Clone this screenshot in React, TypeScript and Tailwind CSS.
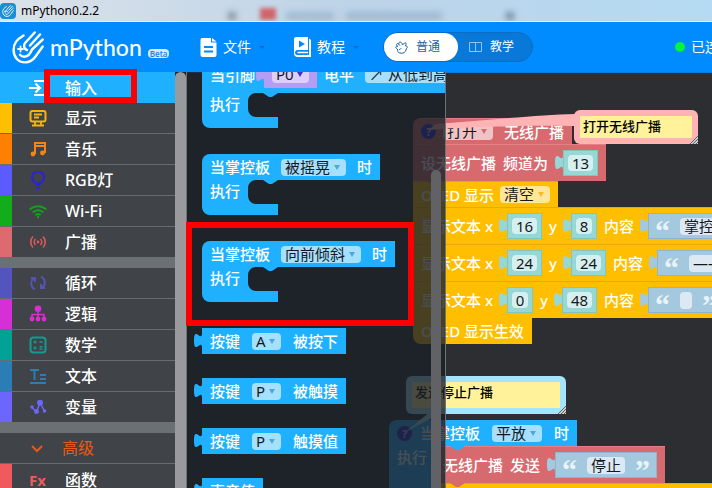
import React from 'react';
import clsx from 'clsx';

interface Category {
    name: string;
    strip: string;
    icon: React.ReactNode;
}

interface SelectFieldProps {
    label: string;
    value: string;
    arrow?: string;
    bg?: string;
}

const Icon: React.FC<{ className: string; children: React.ReactNode }> = ({ className, children }) => (
    <svg viewBox="0 0 18 18" className={clsx('size-[18px] shrink-0', className)} fill="none" stroke="currentColor" strokeWidth="2" aria-hidden="true">
        {children}
    </svg>
);

const HandLogo: React.FC<{ className: string }> = ({ className }) => (
    <svg viewBox="0 0 32 33" className={className} fill="none" stroke="currentColor" strokeWidth="2.4" strokeLinecap="round" strokeLinejoin="round" aria-hidden="true">
        <path d="M11.500 4.500C5 8.500 1.600 12 1.600 19c0 7 4.400 12.400 11.400 12.400 5 0 8-2.400 10.500-5.900L30.700 15.500" />
        <path d="M22.700 1.500 13.500 11.500c-2.500 3-1.500 6.500 1.500 7.500M28 3.500 18 14.500M30.700 8.500 20 18.500c-1.500 4-4 7-7.500 7.200-2 0-3.500-.7-4.500-2" />
        <path d="M8.500 15.500v5M6 18h5" strokeWidth="1.800" />
    </svg>
);

const mainCategories: Category[] = [
    {
        name: '显示',
        strip: 'bg-[#ffbf00]',
        icon: (
            <Icon className="text-[#f5b50a]">
                <rect x="1.500" y="2" width="15" height="10.500" rx="2" />
                <path d="M5 5.500h8M5 8.500h5M6 12v4M12 12v4M3 16.500h12" strokeWidth="1.800" />
            </Icon>
        ),
    },
    {
        name: '音乐',
        strip: 'bg-[#ff8000]',
        icon: (
            <Icon className="text-[#f58410]">
                <path d="M6 14V3h10v10M6 6h10" />
                <circle cx="4" cy="14" r="2.400" fill="currentColor" stroke="none" />
                <circle cx="13.500" cy="13" r="2.400" fill="currentColor" stroke="none" />
            </Icon>
        ),
    },
    {
        name: 'RGB灯',
        strip: 'bg-[#5b5bff]',
        icon: (
            <Icon className="text-[#2c22dd]">
                <circle cx="9" cy="6.500" r="6" />
                <path d="M6.500 14h5M7.500 17h3" />
            </Icon>
        ),
    },
    {
        name: 'Wi-Fi',
        strip: 'bg-[#13ac1b]',
        icon: (
            <Icon className="text-[#13a01b]">
                <path d="M.8 7.500c4.600-4.500 11.800-4.500 16.400 0M3.600 10.500c3-3 7.800-3 10.800 0M6.500 13.200c1.500-1.400 3.500-1.400 5 0" />
                <circle cx="9" cy="15" r="1.200" fill="currentColor" stroke="none" />
            </Icon>
        ),
    },
    {
        name: '广播',
        strip: 'bg-[#dc6a6e]',
        icon: (
            <Icon className="text-[#d8585c]">
                <path d="M4 3.500c-3 3-3 8 0 11M14 3.500c3 3 3 8 0 11M6.500 6c-1.700 1.700-1.700 4.300 0 6M11.500 6c1.700 1.700 1.700 4.300 0 6" strokeWidth="1.700" />
                <circle cx="9" cy="9" r="1.400" fill="currentColor" stroke="none" />
            </Icon>
        ),
    },
];

const logicCategories: Category[] = [
    {
        name: '循环',
        strip: 'bg-[#5454bf]',
        icon: (
            <Icon className="text-[#5454b5]">
                <path d="M4.500 4.500C1 8 1.500 13 6 15.500M2 4h4v4M13.500 13.500C17 10 16.500 5 12 2.500M16 14h-4v-4" />
            </Icon>
        ),
    },
    {
        name: '逻辑',
        strip: 'bg-[#d72fd7]',
        icon: (
            <Icon className="text-[#d72fd7]">
                <path d="M9 5v8M3 13V9.500h12V13" strokeWidth="1.500" />
                <circle cx="9" cy="3.800" r="3.300" fill="currentColor" stroke="none" />
                <g fill="currentColor" stroke="none">
                    <circle cx="3" cy="14" r="2.400" />
                    <circle cx="9" cy="14" r="2.400" />
                    <circle cx="15" cy="14" r="2.400" />
                </g>
            </Icon>
        ),
    },
    {
        name: '数学',
        strip: 'bg-[#00a296]',
        icon: (
            <Icon className="text-[#109c90]">
                <rect x="1.500" y="1.500" width="15" height="15" rx="3" />
                <path d="M4.500 6h3M6 4.500v3M10.500 6h3M4.500 12h3M10.500 10.800h3M10.500 13h3M6 10.500v3" strokeWidth="1.400" />
            </Icon>
        ),
    },
    {
        name: '文本',
        strip: 'bg-[#2a7db5]',
        icon: (
            <Icon className="text-[#2a7db5]">
                <path d="M1 3h9M5.500 3v10M11 8h6M11 12h6M1 16h16" />
            </Icon>
        ),
    },
    {
        name: '变量',
        strip: 'bg-[#6c66ff]',
        icon: (
            <Icon className="text-[#6c66ff]">
                <path d="M3 9.500 7.500 14 11 5l4.500 8" strokeWidth="1.500" />
                <g fill="currentColor" stroke="none">
                    <circle cx="3" cy="9" r="1.700" />
                    <circle cx="7.500" cy="13.500" r="2.400" />
                    <circle cx="11" cy="4.800" r="3" />
                    <circle cx="15.500" cy="13" r="1.800" />
                </g>
            </Icon>
        ),
    },
];

const CategoryRow: React.FC<{ item: Category }> = ({ item }) => (
    <li className="flex h-[31px] border-b border-[#686c70] last:h-[30px] last:border-b-0">
        <span className={clsx('w-3 shrink-0', item.strip)} />
        <button className="flex flex-1 items-center gap-[18px] pl-[17px] text-left">
            {item.icon}
            <span>{item.name}</span>
        </button>
    </li>
);

const Sidebar: React.FC = () => (
    <nav aria-label="积木分类" className="flex shrink-0 bg-[#1e2329]">
        <div className="w-[175px] bg-[#6b7074] text-[16px] leading-5 font-medium text-white">
            <button className="flex h-[31px] w-full items-center gap-[18px] bg-[#1fb1ff] pl-[29px] text-left">
                <Icon className="text-white">
                    <path d="M0 9h10M6.500 4.500 11 9l-4.500 4.500M5 2h12v14H5" />
                </Icon>
                <span>输入</span>
            </button>
            <ul className="bg-[#404347]">
                {mainCategories.map((item) => (
                    <CategoryRow key={item.name} item={item} />
                ))}
            </ul>
            <ul className="mt-[11px] bg-[#404347]">
                {logicCategories.map((item) => (
                    <CategoryRow key={item.name} item={item} />
                ))}
            </ul>
            <div className="mt-[11px] bg-[#404347]">
                <button className="flex h-[31px] w-full items-center gap-4 border-b border-[#686c70] pl-7 text-left font-normal text-[#e85a17]">
                    <Icon className="">
                        <path d="m4 7 5 5 5-5" />
                    </Icon>
                    <span>高级</span>
                </button>
                <div className="flex h-[31px]">
                    <span className="w-3 shrink-0 bg-[#f05a5f]" />
                    <button className="flex flex-1 items-center gap-[18px] pl-[17px] text-left">
                        <span className="w-[18px] font-['Open_Sans',sans-serif] text-[15px] font-bold text-[#f05a5f]" aria-hidden="true">
                            Fx
                        </span>
                        <span>函数</span>
                    </button>
                </div>
            </div>
        </div>
        <div className="w-[11px] rounded-t-full bg-[#999a9b]" />
    </nav>
);

const SelectField: React.FC<SelectFieldProps> = ({ label, value, arrow = 'text-[#4da8dc]', bg = 'bg-[#a5e0ff]' }) => (
    <span className={clsx('flex h-[17px] shrink-0 items-center rounded-sm font-normal', bg)}>
        <select aria-label={label} className="h-[17px] appearance-none pr-[15px] pl-1 leading-[17px] text-[#16191c]">
            <option>{value}</option>
        </select>
        <svg viewBox="0 0 6 5" className={clsx('pointer-events-none -ml-3 mr-1.5 h-[5px] w-1.5', arrow)} aria-hidden="true">
            <path d="M0 0h6L3 5z" fill="currentColor" />
        </svg>
    </span>
);

// left connector of an output block
const Tab: React.FC<{ className: string }> = ({ className }) => (
    <svg viewBox="0 0 8 15" className={clsx('mt-[5px] h-[15px] w-2 shrink-0', className)} aria-hidden="true">
        <path d="M8 0c0 10-8-8-8 7.500S8 5 8 15z" fill="currentColor" />
    </svg>
);

// small bump that sits on top of the next block
const Bump: React.FC<{ className: string }> = ({ className }) => (
    <svg viewBox="0 0 15 4" className={clsx('absolute top-full left-[15px] z-10 h-1 w-[15px]', className)} aria-hidden="true">
        <path d="M0 0h15L9 4H6z" fill="currentColor" />
    </svg>
);

const HelpButton: React.FC = () => (
    <button aria-label="帮助" className="flex size-[15px] shrink-0 items-center justify-center rounded-full bg-[#2a2bd0] text-[11px] leading-none font-bold text-[#b9bdf5]">
        ?
    </button>
);

const EventBlock: React.FC<{ children: React.ReactNode; tall?: boolean }> = ({ children, tall }) => (
    <div className="flex flex-col items-start">
        <div className={clsx('flex items-center gap-[11px] rounded-tl-lg bg-[#1fb1ff] px-2', tall ? 'h-[37px]' : 'h-[26px]')}>{children}</div>
        <div className="relative">
            <svg viewBox="0 0 76 35" className="h-[35px] w-[76px] text-[#1fb1ff]" aria-hidden="true">
                <path d="M0 0H76L70 4H67L61 0H54a8 8 0 0 0-8 8v8a8 8 0 0 0 8 8H76V35H8a8 8 0 0 1-8-8z" fill="currentColor" />
            </svg>
            <span className="absolute top-px left-2">执行</span>
        </div>
    </div>
);

const OutputBlock: React.FC<{ children: React.ReactNode }> = ({ children }) => (
    <div className="-ml-2 flex items-start">
        <Tab className="text-[#1fb1ff]" />
        <div className="flex h-[26px] items-center gap-3 bg-[#1fb1ff] px-2">{children}</div>
    </div>
);

const NumberValue: React.FC<{ value: string; label: string }> = ({ value, label }) => (
    <span className="flex shrink-0 items-start">
        <Tab className="text-[#97d8d6]" />
        <span className="flex h-[26px] items-center border border-[#83c4bd] bg-[#97d8d6] px-1">
            <input
                aria-label={label}
                defaultValue={value}
                className={clsx('h-4 rounded-sm bg-[#d6f0ef] text-center leading-4 font-normal text-[#16191c]', value.length > 1 ? 'w-[25px]' : 'w-4')}
            />
        </span>
    </span>
);

const TextValue: React.FC<{ value: string; label: string; width: string }> = ({ value, label, width }) => (
    <span className="flex shrink-0 items-start">
        <Tab className="text-[#a4c9de]" />
        <span className="flex h-[26px] items-center gap-2.5 border border-[#8fb6c8] bg-[#a4c9de] px-1.5 font-bold text-[#e9f3fa]">
            <span className="h-[26px] font-['Liberation_Serif',serif] text-[30px] leading-9">“</span>
            <input
                aria-label={label}
                defaultValue={value}
                className={clsx('h-[17px] rounded-sm bg-[#dce9f4] px-1 leading-[17px] font-normal text-[#16191c]', width)}
            />
            <span className="h-[26px] font-['Liberation_Serif',serif] text-[30px] leading-9">”</span>
        </span>
    </span>
);

const Statement: React.FC<{ tone: 'red' | 'yellow'; tall?: boolean; className?: string; children: React.ReactNode }> = ({ tone, tall, className, children }) => (
    <div
        className={clsx(
            'relative flex w-max items-center border-t px-2',
            tone === 'red' ? 'gap-[7px] border-[#e58084] bg-[#d76a6e]' : 'gap-1.5 border-[#e3ab09] bg-[#ffbf00]',
            tall ? 'h-[37px]' : 'h-[26px]',
            className,
        )}
    >
        {children}
        <Bump className={tone === 'red' ? 'text-[#d76a6e]' : 'text-[#ffbf00]'} />
    </div>
);

const displayRows = [
    { x: '16', y: '8', text: '掌控板', width: 'w-[53px]' },
    { x: '24', y: '24', text: '————', width: 'w-[68px]' },
    { x: '0', y: '48', text: '', width: 'w-3' },
];

const Note: React.FC<{ text: string; tone: string; size: string }> = ({ text, tone, size }) => (
    <div className={clsx('relative flex rounded-md p-1.5', tone, size)}>
        <textarea
            aria-label="注释"
            defaultValue={text}
            className="w-full resize-none overflow-hidden bg-[#fff29a] pl-[3px] text-[13px] leading-5 text-black"
        />
        <svg viewBox="0 0 8 8" className="absolute right-0 bottom-0 size-2" aria-hidden="true">
            <path d="M8 0v8H0z" fill="#c9c9c9" />
            <path d="M0 8 8 0M3 8l5-5M6 8l2-2" stroke="#666" strokeWidth="1" />
        </svg>
    </div>
);

const Workspace: React.FC = () => (
    <section aria-label="工作区" className="text-[15px] leading-5 font-medium text-white">
        <div className="absolute top-[46px] left-[227px]">
            <Statement tone="red" className="rounded-tl-lg">
                <HelpButton />
                <SelectField label="无线广播开关" value="打开" bg="bg-[#f0c4c5]" arrow="text-[#d76a6e]" />
                <span className="pl-1">无线广播</span>
            </Statement>
            <Statement tone="red" tall>
                <span>设无线广播</span>
                <span>频道为</span>
                <NumberValue label="频道" value="13" />
            </Statement>
            <Statement tone="yellow">
                <span>OLED 显示</span>
                <SelectField label="OLED 显示" value="清空" bg="bg-[#ffe699]" arrow="text-[#f5bd1c]" />
            </Statement>
            {displayRows.map((row) => (
                <Statement key={row.x} tone="yellow" tall>
                    <span>显示文本 x</span>
                    <NumberValue label="x" value={row.x} />
                    <span className="pl-px">y</span>
                    <NumberValue label="y" value={row.y} />
                    <span className="pl-px">内容</span>
                    <TextValue label="内容" value={row.text} width={row.width} />
                </Statement>
            ))}
            <div className="flex h-[26px] w-max items-center rounded-bl-lg bg-[#ffbf00] px-2">OLED 显示生效</div>
        </div>

        <div className="absolute top-[348px] left-[203px] flex flex-col items-start">
            <div className="flex h-[26px] items-center gap-3 rounded-tl-lg bg-[#1fb1ff] px-2">
                <span className="flex items-center gap-2">
                    <HelpButton />
                    当掌控板
                </span>
                <SelectField label="姿态" value="平放" />
                <span>时</span>
            </div>
            <div className="flex">
                <div className="w-[46px] bg-[#1fb1ff] pt-px pl-2">执行</div>
                <div className="relative">
                    <svg viewBox="0 0 15 4" className="absolute top-0 left-[15px] z-10 h-1 w-[15px] text-[#1fb1ff]" aria-hidden="true">
                        <path d="M0 0h15L9 4H6z" fill="currentColor" />
                    </svg>
                    <Statement tone="red" tall>
                        <span>无线广播</span>
                        <span>发送</span>
                        <TextValue label="发送" value="停止" width="w-[38px]" />
                    </Statement>
                    <Statement tone="yellow" tall>
                        <span>OLED 显示</span>
                        <span className="w-60" />
                    </Statement>
                </div>
            </div>
        </div>

        <svg viewBox="0 0 150 24" className="absolute top-[40px] left-[242px] z-10 h-6 w-[150px]" aria-hidden="true">
            <path d="M147 2C110 3 60 8 8 12L0 18C30 15 100 13 147 14z" fill="#ffb3b5" />
        </svg>
        <div className="absolute top-[38px] left-[388px] z-10">
            <Note text="打开无线广播" tone="bg-[#ffb3b5]" size="h-[34px] w-[124px]" />
        </div>
        <svg viewBox="0 0 44 22" className="absolute top-[340px] left-[218px] z-10 h-[22px] w-11" aria-hidden="true">
            <path d="M26 0h18C30 4 16 12 0 21z" fill="#a5e4ff" />
        </svg>
        <div className="absolute top-[304px] left-[220px] z-10">
            <Note text="发送停止广播" tone="bg-[#a5e4ff]" size="h-[38px] w-[160px]" />
        </div>
    </section>
);

const Flyout: React.FC = () => (
    <section
        aria-label="输入积木"
        className="absolute inset-y-0 left-0 z-20 w-[260px] overflow-hidden border-r border-l border-[#6f7377] bg-[#1b2028]/80 text-[15px] leading-5 font-medium text-white"
    >
        <div className="-mt-4 flex w-max flex-col items-start pl-[15px]">
            <EventBlock tall>
                <span>当引脚</span>
                <span className="-ml-2.5 flex items-start">
                    <Tab className="text-[#b59cf5]" />
                    <span className="flex h-[26px] items-center bg-[#b59cf5] px-2">
                        <SelectField label="引脚" value="P0" bg="bg-[#dccffb]" arrow="text-[#4630c8]" />
                    </span>
                </span>
                <span className="-ml-1">电平</span>
                <SelectField label="电平变化" value="↗ 从低到高" />
                <span>时</span>
            </EventBlock>
            <div className="mt-[26px]">
                <EventBlock>
                    <span>当掌控板</span>
                    <SelectField label="动作" value="被摇晃" />
                    <span>时</span>
                </EventBlock>
            </div>
            <div className="mt-[26px]">
                <EventBlock>
                    <span>当掌控板</span>
                    <SelectField label="倾斜" value="向前倾斜" />
                    <span>时</span>
                </EventBlock>
            </div>
            <div className="mt-[26px] flex flex-col items-start gap-6">
                <OutputBlock>
                    <span>按键</span>
                    <SelectField label="按键" value="A" />
                    <span>被按下</span>
                </OutputBlock>
                <OutputBlock>
                    <span>按键</span>
                    <SelectField label="触摸按键" value="P" />
                    <span>被触摸</span>
                </OutputBlock>
                <OutputBlock>
                    <span>按键</span>
                    <SelectField label="触摸值按键" value="P" />
                    <span>触摸值</span>
                </OutputBlock>
                <OutputBlock>
                    <span>声音值</span>
                </OutputBlock>
            </div>
        </div>
        <div className="absolute top-[98px] right-1 bottom-0 w-2.5 rounded-t-full bg-[#606266]" />
    </section>
);

const Caret: React.FC = () => (
    <svg viewBox="0 0 6 3" className="ml-2 h-[3px] w-1.5 text-[#0a6fca]" aria-hidden="true">
        <path d="M0 0h6L3 3z" fill="currentColor" />
    </svg>
);

const Header: React.FC = () => (
    <header className="flex h-[51px] shrink-0 items-center overflow-hidden border-b border-[#0a7be0] bg-[#008cff] pl-3 whitespace-nowrap text-white">
        <div className="flex w-[188px] shrink-0 items-center">
            <HandLogo className="h-[33px] w-8" />
            <h1 className="ml-1.5 font-['Lato',sans-serif] text-[23px] leading-8 font-medium">mPython</h1>
            <span className="mt-3 ml-1.5 rounded-sm bg-[#d5ebff] px-[2px] font-['Open_Sans',sans-serif] text-[8px] leading-[9px] font-semibold text-[#1c83dc]">Beta</span>
        </div>
        <button className="flex shrink-0 items-center text-[14px] leading-5">
            <svg viewBox="0 0 17 19" className="mr-1.5 h-[19px] w-[17px]" aria-hidden="true">
                <path d="M2 0h9v4.500h5.500V17q0 2-2 2h-12q-2 0-2-2V2q0-2 1.500-2zM12 0l4.500 3.500H12z" fill="currentColor" />
                <path d="M4 9h9M4 13.500h9" stroke="#008cff" strokeWidth="1.800" />
            </svg>
            文件
            <Caret />
        </button>
        <button className="ml-[29px] flex shrink-0 items-center text-[14px] leading-5">
            <svg viewBox="0 0 17 20" className="mr-1.5 h-5 w-[17px]" aria-hidden="true">
                <path d="M2 0h12v13H3q-2 .5-2 2.500t2 2.500h12V1.500L17 3v17H3q-3-.5-3-4V2q0-2 2-2zM3.500 14.800h10.500v1.500H3.500z" fill="currentColor" />
                <path d="m5 3.500 6 3.500-6 3.500z" fill="#008cff" />
            </svg>
            教程
            <Caret />
        </button>
        <div className="ml-6 flex h-[30px] shrink-0 items-center rounded-full border border-[#0a6cc4] bg-[#0878d9] text-[12px] leading-4">
            <button className="flex h-7 w-[74px] items-center gap-2 rounded-full bg-white pl-[11px] text-[#1c5fa5]">
                <svg viewBox="0 0 13 13" className="size-[13px]" fill="none" stroke="currentColor" strokeWidth="1" strokeLinejoin="round" aria-hidden="true">
                    <path d="M4 3.500c-1-2.500 2-3.500 3-1l.5 1.500 2-2c1.500-.5 2 .5 1.500 1.500L10.500 5c2 0 2.500 1.500 1 2.300L11 9c-.5 2-2.500 3.500-5 3.200C3 12 2 10 3 9L1.500 7.500C0 6 1 5 2.500 5.500L1.500 3.500C2 2 3 2.500 4 3.500l1 1.200M4 8.500c1 .2 1.800-.4 2-1.300" />
                </svg>
                普通
            </button>
            <button className="flex h-7 w-[74px] items-center gap-2 pl-[11px]">
                <svg viewBox="0 0 13 12" className="h-3 w-[13px] text-[#8ec5f5]" fill="none" stroke="currentColor" aria-hidden="true">
                    <path d="M.5 1.500h12v9H.5zM6.500 1.500v9" />
                </svg>
                教学
            </button>
        </div>
        <div className="ml-[142px] flex shrink-0 items-center gap-1.5 text-[14px] leading-5">
            <span className="size-2.5 rounded-full bg-[#06f53a]" />
            已连接
        </div>
    </header>
);

const TitleBar: React.FC = () => (
    <div className="relative flex h-[22px] shrink-0 items-center overflow-hidden border-b border-[#e4eef7] bg-linear-to-r from-[#dbe2ea] via-[#bdd3e8] to-[#b4dbf3] text-[12px] text-black">
        <span className="flex size-4 items-center justify-center rounded-sm bg-[#1b8fd6] text-white">
            <HandLogo className="size-3" />
        </span>
        <span className="ml-[5px] leading-5">mPython0.2.2</span>
        {/* windows behind the glass title bar */}
        <span className="absolute top-2 left-[260px] h-3 w-4 bg-[#d0646b] blur-[2px]" />
        <span className="absolute top-3 left-[286px] h-2 w-12 bg-[#9db9d2] blur-[3px]" />
        <span className="absolute top-3 left-[346px] h-2 w-24 bg-[#9db9d2] blur-[3px]" />
        <span className="absolute top-3 left-[228px] h-2 w-2 bg-[#7f90a2] blur-[3px]" />
        <span className="absolute top-3 left-[506px] h-2 w-2 bg-[#7189a3] blur-[3px]" />
    </div>
);

const App: React.FC = () => (
    <div className="relative flex h-screen flex-col overflow-hidden bg-[#2c2e31] font-['Noto_Sans','Noto_Sans_CJK_SC',sans-serif]">
        <TitleBar />
        <Header />
        <main className="-mt-px flex min-h-0 flex-1 overflow-hidden">
            <Sidebar />
            <div className="relative flex-1 overflow-hidden">
                <Workspace />
                <Flyout />
                <div className="pointer-events-none absolute top-[150px] left-0 z-30 h-[104px] w-[228px] border-6 border-[#fb0000]" />
            </div>
        </main>
        <div className="pointer-events-none absolute top-[69px] left-11 z-30 h-[34px] w-[93px] border-6 border-[#fb0000]" />
    </div>
);

export default App;
